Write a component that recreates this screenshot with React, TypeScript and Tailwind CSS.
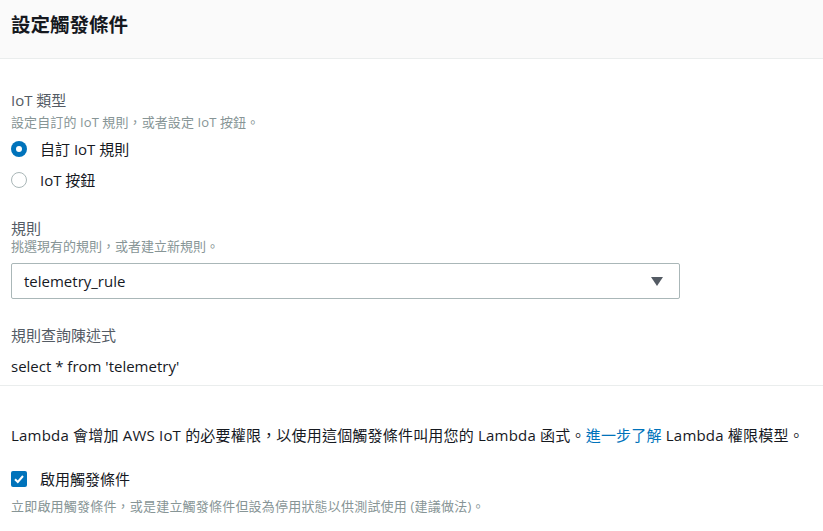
import React from "react";

const font = { fontFamily: '"Open Sans", "Noto Sans CJK TC", sans-serif' };

export default function App() {
  return (
    <div className="w-[823px] h-[531px] bg-white text-[#16191f] overflow-hidden" style={font}>
      <div className="h-[59px] bg-[#fafafa] border-b border-[#eaeded] px-[11px] pt-[12px]">
        <h1 className="text-[19.5px] font-bold leading-[26px]">設定觸發條件</h1>
      </div>
      <div className="px-[11px] pt-[31px]">
        <div className="text-[15px] leading-[20px] text-[#545b64]">IoT 類型</div>
        <div className="mt-[4px] text-[13px] leading-[16px] text-[#879596] tracking-[0.1px]">設定自訂的 IoT 規則，或者設定 IoT 按鈕。</div>
        <div className="mt-[9px] flex items-center h-[20px]">
          <span className="w-[16px] h-[16px] rounded-full bg-[#0073bb] flex items-center justify-center">
            <span className="w-[6px] h-[6px] rounded-full bg-white" />
          </span>
          <span className="ml-[13px] text-[15px]">自訂 IoT 規則</span>
        </div>
        <div className="mt-[11px] flex items-center h-[20px]">
          <span className="w-[16px] h-[16px] rounded-full border-[1.5px] border-[#aab7b8] bg-white" />
          <span className="ml-[13px] text-[15px]">IoT 按鈕</span>
        </div>

        <div className="mt-[28px] text-[15px] leading-[20px] text-[#545b64]">規則</div>
        <div className="text-[13px] leading-[16px] text-[#879596]">挑選現有的規則，或者建立新規則。</div>
        <div className="mt-[9px] w-[669px] h-[36px] border border-[#aab7b8] rounded-[2px] flex items-center justify-between pl-[12px] pr-[16px]">
          <span className="text-[15px]">telemetry_rule</span>
          <svg width="12" height="9" viewBox="0 0 12 9"><path d="M0 0 L12 0 L6 9 Z" fill="#545b64" /></svg>
        </div>

        <div className="mt-[26px] text-[15px] leading-[20px] text-[#545b64]">規則查詢陳述式</div>
        <div className="mt-[11px] text-[15px] leading-[20px]">select * from 'telemetry'</div>
      </div>
      <div className="mt-[9px] border-t border-[#eaeded]" />
      <div className="px-[11px] pt-[39px]">
        <div className="text-[15px] leading-[20px] whitespace-nowrap tracking-[0.2px]">
          Lambda 會增加 AWS IoT 的必要權限，以使用這個觸發條件叫用您的 Lambda 函式。<span className="text-[#0073bb]">進一步了解</span> Lambda 權限模型。
        </div>
        <div className="mt-[24px] flex items-center h-[20px]">
          <span className="w-[16px] h-[16px] rounded-[2px] bg-[#0073bb] flex items-center justify-center">
            <svg width="12" height="12" viewBox="0 0 12 12"><path d="M2 6.2 L4.8 9 L10 3" stroke="white" strokeWidth="2" fill="none" /></svg>
          </span>
          <span className="ml-[13px] text-[15px]">啟用觸發條件</span>
        </div>
        <div className="mt-[9px] text-[13px] leading-[16px] text-[#879596] tracking-[0.2px]">立即啟用觸發條件，或是建立觸發條件但設為停用狀態以供測試使用 (建議做法)。</div>
      </div>
    </div>
  );
}
